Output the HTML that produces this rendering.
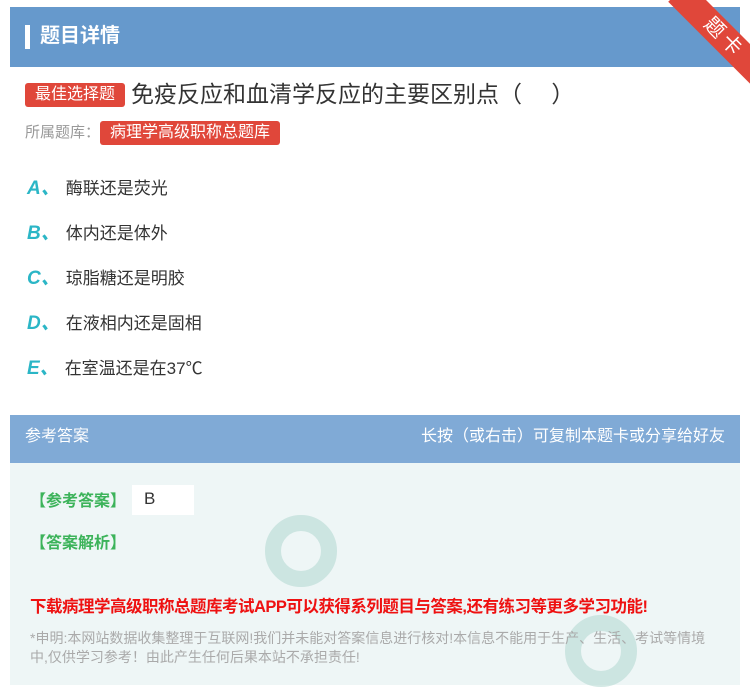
<!DOCTYPE html>
<html><head><meta charset="utf-8"><style>
body{margin:0;width:750px;height:685px;background:#fff;font-family:"Liberation Sans","Noto Sans CJK SC",sans-serif;position:relative;overflow:hidden}
.hdr{position:absolute;left:10px;top:7px;width:730px;height:60px;background:#6699cc}
.hdr .bar{position:absolute;left:15px;top:18px;width:5px;height:24px;background:#fff}
.hdr .t{position:absolute;left:30px;top:15px;color:#fff;font-size:20px;font-weight:bold;line-height:28px}
.ribbon{position:absolute;width:130px;height:28px;background:#e0473a;transform:rotate(45deg);transform-origin:0 0;left:688px;top:-18px;color:#fff;font-size:20px;text-align:center;line-height:28px;letter-spacing:4px}
.tag{display:inline-block;background:#e0473a;color:#fff;border-radius:3px;font-size:15px;padding:0 10px;line-height:24px}
.q{position:absolute;left:25px;top:79px;font-size:23px;color:#333;line-height:30px}
.q .tag{font-size:16px;vertical-align:3px;margin-right:6px}
.lib{position:absolute;left:25px;top:121px;font-size:15px;color:#999;line-height:24px}
.lib .tag{font-size:16px}
.opt{position:absolute;left:27px;font-size:17px;color:#333}
.opt b{color:#2bb6c6;font-style:italic;font-size:19px;margin-right:6px}
.ans{position:absolute;left:10px;top:415px;width:730px;height:270px;background:#eef6f6}
.ah{height:48px;background:#80aad6;color:#fff;font-size:16px;line-height:44px;padding:0 15px;display:flex;justify-content:space-between}
.g{position:absolute;color:#3cb35a;font-size:16px;font-weight:bold}
.red{position:absolute;left:20px;top:178px;color:#ee1111;font-size:16.5px;font-weight:bold;letter-spacing:-0.5px}
.note{position:absolute;left:20px;top:214px;width:688px;color:#aaa;font-size:14px;line-height:19px}
.swirl{position:absolute;border-radius:50%;border:16px solid #a9d3cb;opacity:.5}
</style></head><body>
<div class="hdr"><div class="bar"></div><div class="t">题目详情</div></div>
<div class="ribbon">题卡</div>
<div class="q"><span class="tag">最佳选择题</span>免疫反应和血清学反应的主要区别点（　 ）</div>
<div class="lib">所属题库：<span class="tag">病理学高级职称总题库</span></div>
<div class="opt" style="top:173px"><b>A、</b>酶联还是荧光</div>
<div class="opt" style="top:218px"><b>B、</b>体内还是体外</div>
<div class="opt" style="top:263px"><b>C、</b>琼脂糖还是明胶</div>
<div class="opt" style="top:308px"><b>D、</b>在液相内还是固相</div>
<div class="opt" style="top:353px"><b>E、</b>在室温还是在37℃</div>
<div class="ans">
<div class="ah"><span>参考答案</span><span>长按（或右击）可复制本题卡或分享给好友</span></div>
<div class="swirl" style="left:255px;top:100px;width:40px;height:40px"></div>
<div class="swirl" style="left:555px;top:200px;width:40px;height:40px"></div>
<div class="g" style="left:20px;top:72px">【参考答案】</div>
<div style="position:absolute;left:122px;top:70px;width:62px;height:30px;background:#fff;font-size:17px;color:#333;padding-left:12px;box-sizing:border-box;line-height:28px">B</div>
<div class="g" style="left:20px;top:114px">【答案解析】</div>
<div class="red">下载病理学高级职称总题库考试APP可以获得系列题目与答案,还有练习等更多学习功能!</div>
<div class="note">*申明:本网站数据收集整理于互联网!我们并未能对答案信息进行核对!本信息不能用于生产、生活、考试等情境中,仅供学习参考！由此产生任何后果本站不承担责任!</div>
</div>
</body></html>
